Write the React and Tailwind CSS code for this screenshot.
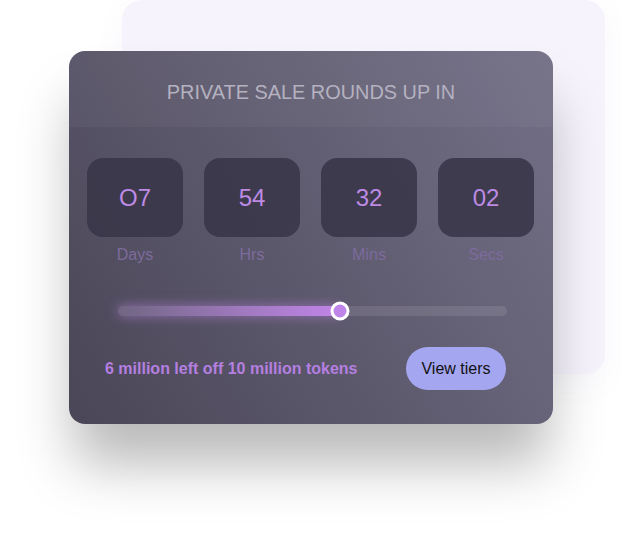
import React from "react";

const units = [
  { v: "O7", l: "Days" },
  { v: "54", l: "Hrs" },
  { v: "32", l: "Mins" },
  { v: "02", l: "Secs" },
];

export default function App() {
  return (
    <div className="relative w-[622px] h-[543px] overflow-hidden bg-white font-['Liberation_Sans',Arial,sans-serif]">
      <div className="absolute left-[122px] top-0 w-[483px] h-[374px] rounded-[20px] bg-[#f6f3fc] shadow-[0_10px_30px_rgba(120,100,180,0.06)]" />
      <div className="relative ml-[69px] mt-[51px] w-[484px] h-[373px] rounded-[16px] overflow-hidden bg-[linear-gradient(60deg,#4a4657_0%,#5f5b6f_50%,#736f86_100%)] shadow-[0_45px_55px_-5px_rgba(0,0,0,0.28)]">
        <div className="h-[76px] flex items-center justify-center bg-white/[0.04] pt-[7px]">
          <span className="text-[19.9px] text-[#b4b1c0]">PRIVATE SALE ROUNDS UP IN</span>
        </div>
        <div className="flex gap-[21px] px-[18px] mt-[31px]">
          {units.map((u) => (
            <div key={u.l} className="flex flex-col items-center">
              <div className="w-[96px] h-[79px] rounded-[16px] bg-[#3a3649]/90 flex items-center justify-center">
                <span className="text-[24px] text-[#bd8ae4]">{u.v}</span>
              </div>
              <span className="mt-[9px] text-[16px] leading-[18px] text-[#7c6b9c]">{u.l}</span>
            </div>
          ))}
        </div>
        <div className="relative mx-[49px] mr-[46px] mt-[42px] h-[10px] rounded-full bg-white/[0.1]">
          <div className="absolute left-0 top-0 h-full w-[57%] rounded-full bg-[linear-gradient(90deg,rgba(190,140,235,0.15),#c084e8)] shadow-[0_0_12px_rgba(192,132,232,0.6)]" />
          <div className="absolute left-[57%] top-1/2 -translate-x-1/2 -translate-y-1/2 w-[19px] h-[19px] rounded-full border-[3px] border-white bg-[#bf84e8]" />
        </div>
        <div className="flex items-center justify-between pl-[36px] pr-[47px] mt-[31px]">
          <span className="text-[16px] font-bold text-[#b47fe0]">6 million left off 10 million tokens</span>
          <button className="w-[100px] h-[43px] rounded-full bg-[#a5a6f0] text-[16px] text-[#111]">View tiers</button>
        </div>
      </div>
    </div>
  );
}
